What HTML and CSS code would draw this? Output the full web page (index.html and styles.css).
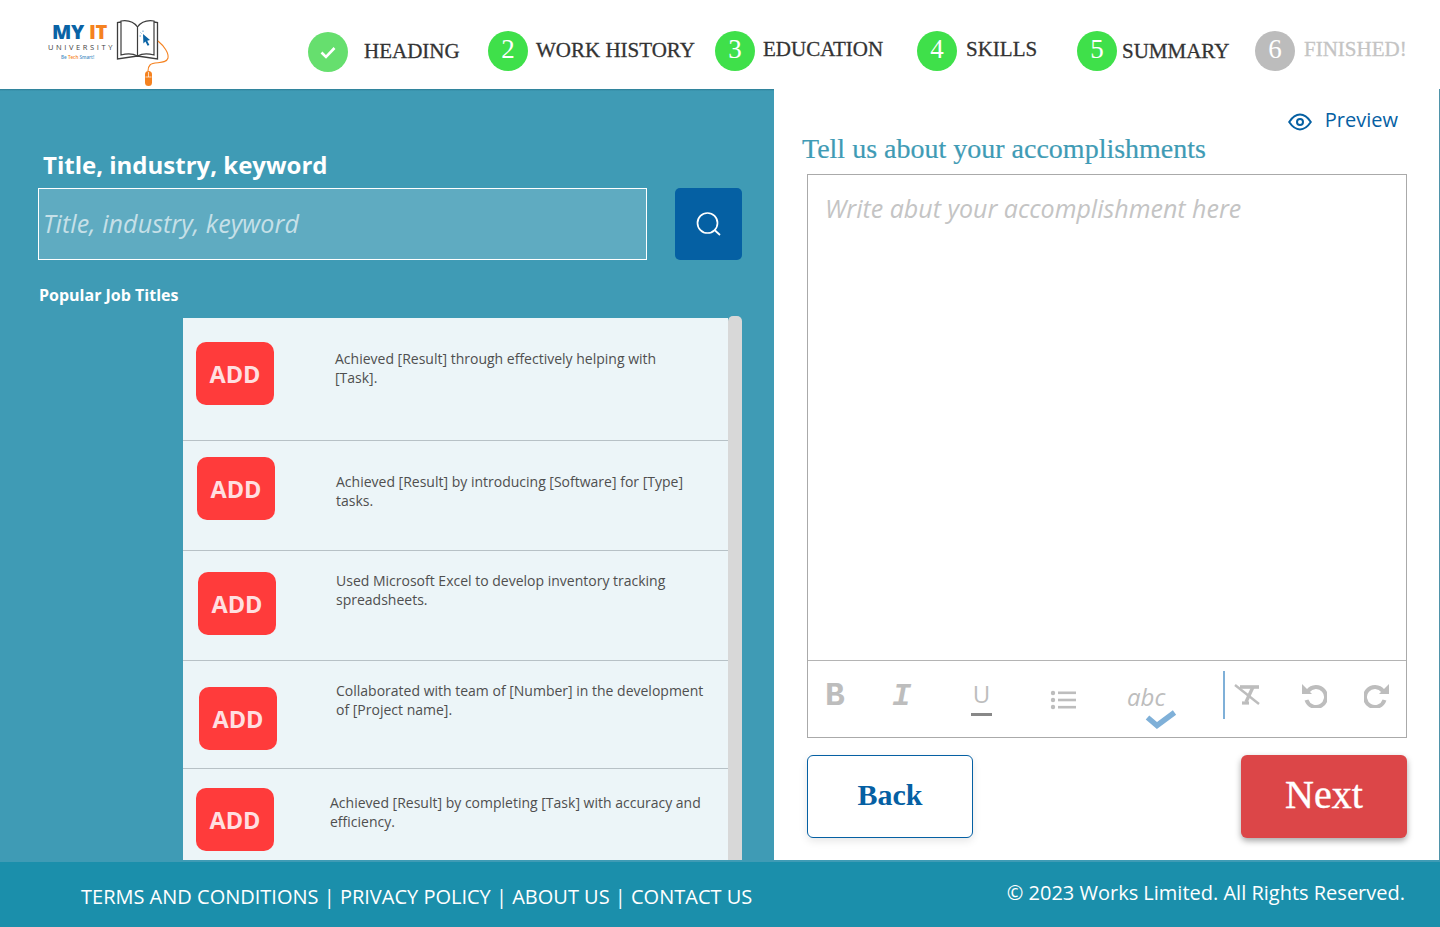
FILE: index.html
```html
<!DOCTYPE html>
<html lang="en">
<head>
<meta charset="utf-8">
<title>Tell us about your accomplishments</title>
<link rel="stylesheet" href="styles.css">
</head>
<body>
<header class="top">
  <svg class="logo" width="140" height="74" viewBox="0 0 140 74" aria-label="My IT University">
    <text class="logo-my" x="12" y="24">MY <tspan class="logo-it">IT</tspan></text>
    <text class="logo-uni" x="8" y="35">UNIVERSITY</text>
    <text class="logo-tag" x="21" y="43.5">Be <tspan class="logo-tag-o">Tech</tspan> Smart!</text>
    <path d="M81 7 L77.5 7.5 V44 L97.5 41 L117.5 44 V7.5 L114 7" fill="none" stroke="#3d3d3d" stroke-width="1.3"/>
    <path d="M81 40 V6 C88 5 94 7 97.5 12 C101 7 107 5 114 6 V40 C107 38 101 39 97.5 41 C94 39 88 38 81 40 Z M97.5 12 V41" fill="#fff" stroke="#3d3d3d" stroke-width="1.2"/>
    <path d="M103 19 L110 25 L107.2 25.8 L109.4 30 L107.6 30.8 L105.4 26.6 L103.4 28.6 Z" fill="#0a63a5"/>
    <path d="M100.5 17.5 L101.5 18.5 M99.5 21 H101 M103 15.5 V17" stroke="#4a90c4" stroke-width=".8"/>
    <path d="M118 26 C124 31 129 38 128 43 C126 50 114 46 110 50 C108 52 108 54 108 56" fill="none" stroke="#f58220" stroke-width="1.1"/>
    <rect x="105" y="56" width="7" height="15" rx="3.5" fill="#f58220"/>
    <path d="M105.5 62 H111.5 M108.5 57 V62" stroke="#fff" stroke-width=".7"/>
  </svg>
  <ol class="steps">
    <li class="step step-a"><span class="dot dot-done"><svg width="16" height="13" viewBox="0 0 16 13"><path d="M1.5 6.5 L6 11 L14.5 2" fill="none" stroke="#fff" stroke-width="2.6"/></svg></span><span class="label">HEADING</span></li>
    <li class="step step-b"><span class="dot">2</span><span class="label">WORK HISTORY</span></li>
    <li class="step step-c"><span class="dot">3</span><span class="label">EDUCATION</span></li>
    <li class="step step-d"><span class="dot">4</span><span class="label">SKILLS</span></li>
    <li class="step step-e"><span class="dot">5</span><span class="label">SUMMARY</span></li>
    <li class="step step-f"><span class="dot dot-off">6</span><span class="label label-off">FINISHED!</span></li>
  </ol>
</header>

<main class="main">
  <section class="left">
    <h2 class="search-title">Title, industry, keyword</h2>
    <div class="search-row">
      <div class="search-input">Title, industry, keyword</div>
      <button class="search-btn" aria-label="Search"><svg width="26" height="26" viewBox="0 0 26 26"><circle cx="11.5" cy="12" r="10" fill="none" stroke="#fff" stroke-width="1.7"/><path d="M18.5 19 L24 24" stroke="#fff" stroke-width="1.7"/></svg></button>
    </div>
    <h3 class="popular">Popular Job Titles</h3>
    <div class="list-wrap">
      <ul class="list">
        <li class="row row-1"><span class="add">ADD</span><p class="row-text">Achieved [Result] through effectively helping with<br>[Task].</p></li>
        <li class="row row-2"><span class="add">ADD</span><p class="row-text">Achieved [Result] by introducing [Software] for [Type]<br>tasks.</p></li>
        <li class="row row-3"><span class="add">ADD</span><p class="row-text">Used Microsoft Excel to develop inventory tracking<br>spreadsheets.</p></li>
        <li class="row row-4"><span class="add">ADD</span><p class="row-text">Collaborated with team of [Number] in the development<br>of [Project name].</p></li>
        <li class="row row-5"><span class="add">ADD</span><p class="row-text">Achieved [Result] by completing [Task] with accuracy and<br>efficiency.</p></li>
      </ul>
      <div class="scroll"></div>
    </div>
  </section>

  <section class="right">
    <div class="preview">
      <svg width="24" height="18" viewBox="0 0 24 18"><path d="M1.2 9 C4.5 4 8 1.6 12 1.6 C16 1.6 19.5 4 22.8 9 C19.5 14 16 16.4 12 16.4 C8 16.4 4.5 14 1.2 9 Z" fill="none" stroke="#0560a3" stroke-width="2"/><circle cx="12" cy="9" r="3" fill="none" stroke="#0560a3" stroke-width="2"/></svg>
      <span>Preview</span>
    </div>
    <h2 class="accomp">Tell us about your accomplishments</h2>
    <div class="editor">
      <div class="editor-body">Write abut your accomplishment here</div>
      <div class="toolbar">
        <span class="tool tool-b">B</span>
        <span class="tool tool-i">I</span>
        <span class="tool tool-u">U</span>
        <span class="tool tool-list"><svg width="26" height="20" viewBox="0 0 26 20"><g fill="#bdbdbd"><circle cx="3" cy="3" r="2.2"/><circle cx="3" cy="10" r="2.2"/><circle cx="3" cy="17" r="2.2"/><rect x="8" y="1.5" width="18" height="2.6"/><rect x="8" y="8.7" width="18" height="2.6"/><rect x="8" y="15.9" width="18" height="2.6"/></g></svg></span>
        <span class="tool tool-abc">abc<svg class="abc-check" width="32" height="20" viewBox="0 0 32 20"><path d="M2.5 8.5 L12 16.5 L29.5 3.5" fill="none" stroke="#7fb0d8" stroke-width="5.5"/></svg></span>
        <span class="tool-sep"></span>
        <span class="tool"><svg width="26" height="24" viewBox="0 0 26 24"><g fill="none" stroke="#bdbdbd"><path d="M1 2 L25 21" stroke-width="2.4"/><path d="M6 4 H25" stroke-width="3.6"/><path d="M19 4 L12 19" stroke-width="3.4"/><path d="M8 20 H15" stroke-width="3.2"/></g></svg></span>
        <span class="tool"><svg width="25" height="25" viewBox="0 0 25 25"><path d="M6 8 A10 10 0 1 1 4.5 17" fill="none" stroke="#bdbdbd" stroke-width="4"/><path d="M0 1 L10 11 H0 Z" fill="#bdbdbd"/></svg></span>
        <span class="tool"><svg width="25" height="25" viewBox="0 0 25 25"><path d="M19 8 A10 10 0 1 0 20.5 17" fill="none" stroke="#bdbdbd" stroke-width="4"/><path d="M25 1 L15 11 H25 Z" fill="#bdbdbd"/></svg></span>
      </div>
    </div>
    <div class="actions">
      <button class="btn btn-back">Back</button>
      <button class="btn btn-next">Next</button>
    </div>
  </section>
</main>

<footer class="foot">
  <nav class="foot-links">TERMS AND CONDITIONS | PRIVACY POLICY | ABOUT US | CONTACT US</nav>
  <p class="copy">© 2023 Works Limited. All Rights Reserved.</p>
</footer>
</body>
</html>
```
FILE: styles.css
```css
* { box-sizing: border-box; }
html, body { margin: 0; padding: 0; }
body {
  width: 1440px;
  height: 927px;
  overflow: hidden;
  display: flex;
  flex-direction: column;
  background: #fff;
  font-family: "Open Sans", sans-serif;
}
h2, h3, p, ul, ol { margin: 0; padding: 0; list-style: none; }
button { font: inherit; border: 0; padding: 0; cursor: pointer; }

/* Header */
.top {
  height: 89px;
  flex: none;
  display: flex;
  padding: 15px 0 0 40px;
}
.logo { flex: none; }
.logo-my { font: 800 20px "Open Sans", sans-serif; fill: #0a63a5; letter-spacing: -.3px; }
.logo-it { fill: #f58220; }
.logo-uni { font: 400 7.5px "Open Sans", sans-serif; fill: #444; letter-spacing: 2.6px; }
.logo-tag { font: 600 4.6px "Open Sans", sans-serif; fill: #4a90c4; }
.logo-tag-o { fill: #f58220; }

.steps {
  margin: 16px 0 0 128px;
  display: grid;
  grid-template-columns: 180px 227px 202px 160px 178px 180px;
  height: 42px;
}
.step { display: flex; align-items: flex-start; }
.dot {
  flex: none;
  width: 40px;
  height: 40px;
  border-radius: 50%;
  background: #3fe04a;
  color: #fff;
  display: flex;
  align-items: center;
  justify-content: center;
  padding-bottom: 3px;
  font: 27px/1 "Liberation Serif", serif;
}
.dot-done { background: #66df6e; margin-top: 1px; padding-bottom: 0; }
.dot-off { background: #bcbcbc; }
.label {
  font: 400 21px/30px "Liberation Serif", serif;
  color: #333;
  white-space: nowrap;
  -webkit-text-stroke: .3px currentColor;
}
.label-off { color: #c4c4c4; }
.step-a .label { margin: 5px 0 0 16px; }
.step-b .label { margin: 4px 0 0 8px; }
.step-c .label { margin: 3px 0 0 8px; }
.step-d .label { margin: 3px 0 0 9px; }
.step-e .label { margin: 5px 0 0 5px; }
.step-f .label { margin: 3px 0 0 9px; }

/* Main */
.main { flex: 1; min-height: 0; display: flex; }
.left {
  width: 774px;
  flex: none;
  display: flex;
  flex-direction: column;
  padding: 60px 32px 0 38px;
  background: linear-gradient(#2d7d95, #3f9bb5 2px);
  color: #fff;
}
.search-title {
  font: 700 24px/32px "Open Sans", sans-serif;
  padding-left: 5px;
}
.search-row { margin-top: 7px; display: flex; gap: 28px; }
.search-input {
  width: 609px;
  height: 72px;
  border: 1px solid #fff;
  background: rgba(255, 255, 255, .17);
  padding: 0 0 2px 4px;
  display: flex;
  align-items: center;
  font: italic 400 25px "Open Sans", sans-serif;
  letter-spacing: .1px;
  color: #c6e0e8;
}
.search-btn {
  width: 67px;
  height: 72px;
  border-radius: 5px;
  background: #0560a3;
  display: flex;
  align-items: center;
  justify-content: center;
}
.popular {
  margin-top: 24px;
  padding-left: 1px;
  font: 700 16px/22px "Open Sans", sans-serif;
}
.list-wrap {
  flex: 1;
  min-height: 0;
  margin: 10px 0 0 145px;
  padding-top: 2px;
  display: flex;
  overflow: hidden;
}
.list { flex: 1; background: #ecf5f8; }
.scroll {
  width: 14px;
  margin-top: -2px;
  background: #d8d8d8;
  border-radius: 5px 5px 0 0;
}
.row {
  height: var(--h);
  border-bottom: 1px solid #b7c1c6;
  display: grid;
  grid-template-columns: var(--text-x) 1fr;
  align-items: start;
}
.add {
  width: 78px;
  height: 63px;
  margin: var(--btn-top) 0 0 var(--btn-x);
  border-radius: 10px;
  background: #ff3b3b;
  color: #ffdfe0;
  display: flex;
  align-items: center;
  justify-content: center;
  font: 700 23.5px "Open Sans", sans-serif;
}
.row-text {
  margin-top: var(--text-top);
  font: 400 14px/19px "Open Sans", sans-serif;
  color: #4f4f4f;
  white-space: nowrap;
}
.row-1 { --h: 123px; --btn-x: 13px; --btn-top: 24px; --text-x: 152px; --text-top: 31px; }
.row-2 { --h: 110px; --btn-x: 14px; --btn-top: 16px; --text-x: 153px; --text-top: 31px; }
.row-3 { --h: 110px; --btn-x: 15px; --btn-top: 21px; --text-x: 153px; --text-top: 20px; }
.row-4 { --h: 108px; --btn-x: 16px; --btn-top: 26px; --text-x: 153px; --text-top: 20px; }
.row-5 { --h: 92px; --btn-x: 13px; --btn-top: 19px; --text-x: 147px; --text-top: 24px; border-bottom: 0; }

.right {
  flex: 1;
  padding: 17px 0 0 28px;
  border-right: 1px solid #4f93a9;
}
.preview {
  height: 28px;
  display: flex;
  align-items: center;
  justify-content: flex-end;
  gap: 13px;
  padding: 0 41px 2px 0;
  font-size: 20px;
  color: #0560a3;
}
.preview svg { margin-top: 5px; }
.accomp {
  font: 400 28px/30px "Liberation Serif", serif;
  color: #3f9bb5;
  -webkit-text-stroke: .2px currentColor;
}
.editor {
  margin: 10px 0 0 5px;
  width: 600px;
  height: 564px;
  border: 1px solid #aaa;
  display: flex;
  flex-direction: column;
}
.editor-body {
  flex: 1;
  padding: 16px 17px;
  font: italic 400 25px/34px "Open Sans", sans-serif;
  color: #c4c4c4;
}
.toolbar {
  height: 77px;
  flex: none;
  border-top: 1px solid #b4b4b4;
  display: grid;
  grid-template-columns: 68px 77px 79px 77px 96px 11px 68px 62px 26px;
  padding-left: 18px;
  align-items: start;
  color: #bdbdbd;
}
.tool { display: block; margin-top: 22px; line-height: 0; }
.tool-b { margin: 24px 0 0 -1px; font: 700 33px/24px "Liberation Mono", monospace; }
.tool-i { margin: 24px 0 0 -2px; font: italic 700 32px/24px "Liberation Mono", monospace; }
.tool-u {
  font: 400 24px/30px "Open Sans", sans-serif;
  text-align: center;
  width: 21px;
  margin-top: 18px;
  height: 37px;
  border-bottom: 3px solid #888;
}
.tool-list { margin-top: 29px; }
.tool-abc {
  position: relative;
  margin-top: 19px;
  font: italic 400 24px/34px "Open Sans", sans-serif;
}
.abc-check { position: absolute; left: 18px; top: 29px; }
.tool-sep { width: 2px; height: 48px; margin-top: 10px; background: #7fb0d8; }

.actions {
  margin: 17px 0 0 5px;
  width: 600px;
  display: flex;
  justify-content: space-between;
}
.btn {
  width: 166px;
  height: 83px;
  border-radius: 6px;
  padding-bottom: 4px;
  font-family: "Liberation Serif", serif;
}
.btn-back {
  background: #fff;
  border: 1px solid #0560a3;
  color: #0560a3;
  font-size: 30px;
  font-weight: 700;
  box-shadow: 0 3px 8px rgba(0, 0, 0, .1);
}
.btn-next {
  background: #dc4648;
  color: #fff;
  font-size: 40px;
  -webkit-text-stroke: .4px currentColor;
  box-shadow: 0 3px 6px rgba(0, 0, 0, .35);
}

/* Footer */
.foot {
  height: 67px;
  flex: none;
  background: #1b8fab;
  border-top: 2px solid #3f9bb5;
  display: flex;
  justify-content: space-between;
  padding: 0 35px 0 81px;
  color: #fff;
  font-size: 20px;
}
.foot-links { margin-top: 20px; line-height: 30px; }
.copy { margin-top: 16px; line-height: 30px; }
```
